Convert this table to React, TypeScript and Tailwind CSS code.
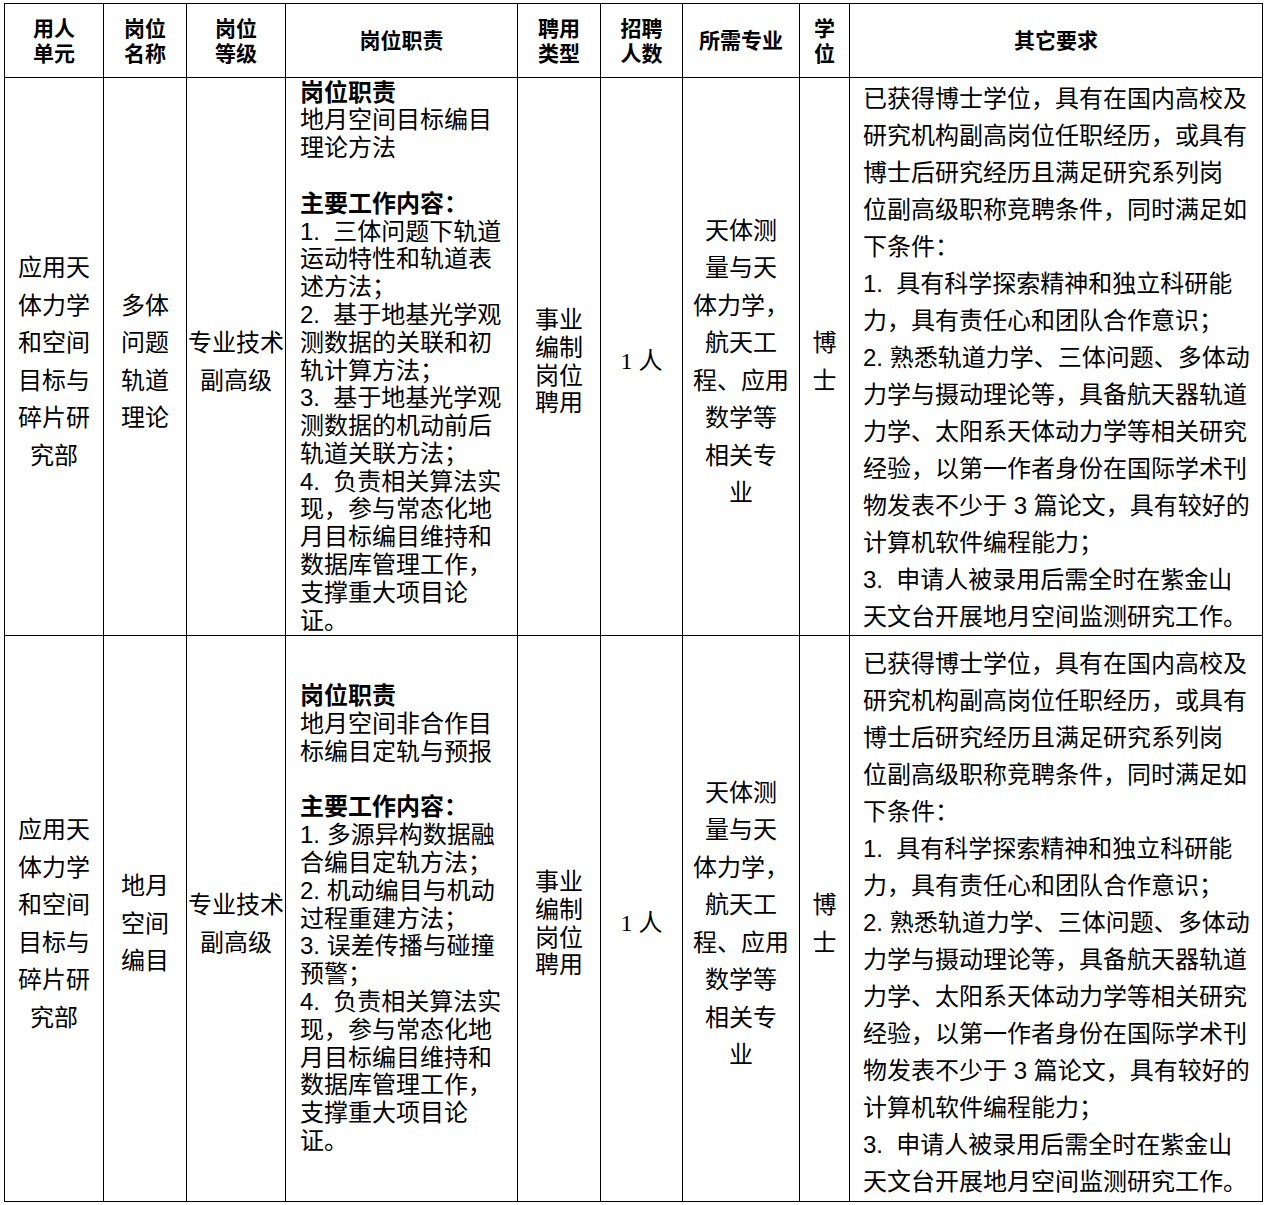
import React from "react";

type Line = { text: string; bold?: boolean };

const font = "font-['Liberation_Sans','Noto_Sans_CJK_SC',sans-serif]";

//* header cell
const Th: React.FC<{ lines: string[] }> = ({ lines }) => (
  <td className="border border-black p-0 text-center align-middle text-[21px] leading-[25px] font-bold">
    {lines.map((l, i) => (
      <div key={i}>{l}</div>
    ))}
  </td>
);

//* stacked, centered lines
const Stack: React.FC<{ lines: string[]; lh: string; extra?: string }> = ({
  lines,
  lh,
  extra = "",
}) => (
  <td
    className={`border border-black p-0 pt-[10px] text-center align-middle text-[24px] whitespace-nowrap ${lh} ${extra}`}
  >
    {lines.map((l, i) => (
      <div key={i}>{l}</div>
    ))}
  </td>
);

//* duties
const Duties: React.FC<{ lines: Line[] }> = ({ lines }) => (
  <td className="border border-black p-0 pl-[14px] align-middle text-left text-[24px] leading-[27.8px] whitespace-nowrap">
    {lines.map((l, i) => (
      <div key={i} className={l.bold ? "font-bold" : ""}>
        {l.text === "" ? "\u00a0" : l.text}
      </div>
    ))}
  </td>
);

const unit = ["应用天", "体力学", "和空间", "目标与", "碎片研", "究部"];
const level = ["专业技术", "副高级"];
const hire = ["事业", "编制", "岗位", "聘用"];
const major = ["天体测", "量与天", "体力学，", "航天工", "程、应用", "数学等", "相关专", "业"];
const degree = ["博", "士"];

const others = [
  "已获得博士学位，具有在国内高校及",
  "研究机构副高岗位任职经历，或具有",
  "博士后研究经历且满足研究系列岗",
  "位副高级职称竞聘条件，同时满足如",
  "下条件：",
  "1.\u00a0 具有科学探索精神和独立科研能",
  "力，具有责任心和团队合作意识；",
  "2. 熟悉轨道力学、三体问题、多体动",
  "力学与摄动理论等，具备航天器轨道",
  "力学、太阳系天体动力学等相关研究",
  "经验，以第一作者身份在国际学术刊",
  "物发表不少于 3 篇论文，具有较好的",
  "计算机软件编程能力；",
  "3.\u00a0 申请人被录用后需全时在紫金山",
  "天文台开展地月空间监测研究工作。",
];

const tail: Line[] = [
  { text: "4.\u00a0 负责相关算法实" },
  { text: "现，参与常态化地" },
  { text: "月目标编目维持和" },
  { text: "数据库管理工作，" },
  { text: "支撑重大项目论" },
  { text: "证。" },
];

const duties1: Line[] = [
  { text: "岗位职责", bold: true },
  { text: "地月空间目标编目" },
  { text: "理论方法" },
  { text: "" },
  { text: "主要工作内容：", bold: true },
  { text: "1.\u00a0 三体问题下轨道" },
  { text: "运动特性和轨道表" },
  { text: "述方法；" },
  { text: "2.\u00a0 基于地基光学观" },
  { text: "测数据的关联和初" },
  { text: "轨计算方法；" },
  { text: "3.\u00a0 基于地基光学观" },
  { text: "测数据的机动前后" },
  { text: "轨道关联方法；" },
  ...tail,
];

const duties2: Line[] = [
  { text: "岗位职责", bold: true },
  { text: "地月空间非合作目" },
  { text: "标编目定轨与预报" },
  { text: "" },
  { text: "主要工作内容：", bold: true },
  { text: "1. 多源异构数据融" },
  { text: "合编目定轨方法；" },
  { text: "2. 机动编目与机动" },
  { text: "过程重建方法；" },
  { text: "3. 误差传播与碰撞" },
  { text: "预警；" },
  ...tail,
];

//* one job row
const JobRow: React.FC<{ name: string[]; duties: Line[]; h: string; pt: string }> = ({
  name,
  duties,
  h,
  pt,
}) => (
  <tr className={h}>
    <Stack lines={unit} lh="leading-[37.5px]" />
    <Stack lines={name} lh="leading-[37.5px]" />
    <Stack lines={level} lh="leading-[37.5px]" />
    <Duties lines={duties} />
    <Stack lines={hire} lh="leading-[27.6px]" />
    <Stack lines={["1 人"]} lh="leading-[37.5px]" extra="font-['Liberation_Serif','Noto_Sans_CJK_SC',serif]" />
    <Stack lines={major} lh="leading-[37.5px]" />
    <Stack lines={degree} lh="leading-[37.5px]" />
    <td className={`border border-black p-0 pl-[13px] ${pt} align-middle text-left text-[24px] leading-[37px] whitespace-nowrap`}>
      {others.map((l, i) => (
        <div key={i}>{l}</div>
      ))}
    </td>
  </tr>
);

export default function App() {
  return (
    <div className={`bg-white text-black pl-[4px] pt-[3px] w-[1265px] h-[1205px] ${font}`}>
      <table className="border-collapse table-fixed w-[1258px] border border-black">
        <colgroup>
          <col className="w-[99px]" />
          <col className="w-[83px]" />
          <col className="w-[99px]" />
          <col className="w-[232px]" />
          <col className="w-[83px]" />
          <col className="w-[82px]" />
          <col className="w-[117px]" />
          <col className="w-[50px]" />
          <col className="w-[413px]" />
        </colgroup>
        <tbody>
          <tr className="h-[74px]">
            <Th lines={["用人", "单元"]} />
            <Th lines={["岗位", "名称"]} />
            <Th lines={["岗位", "等级"]} />
            <Th lines={["岗位职责"]} />
            <Th lines={["聘用", "类型"]} />
            <Th lines={["招聘", "人数"]} />
            <Th lines={["所需专业"]} />
            <Th lines={["学", "位"]} />
            <Th lines={["其它要求"]} />
          </tr>
          <JobRow name={["多体", "问题", "轨道", "理论"]} duties={duties1} h="h-[557px]" pt="pt-[2px]" />
          <JobRow name={["地月", "空间", "编目"]} duties={duties2} h="h-[566px]" pt="pt-[8px]" />
        </tbody>
      </table>
    </div>
  );
}
